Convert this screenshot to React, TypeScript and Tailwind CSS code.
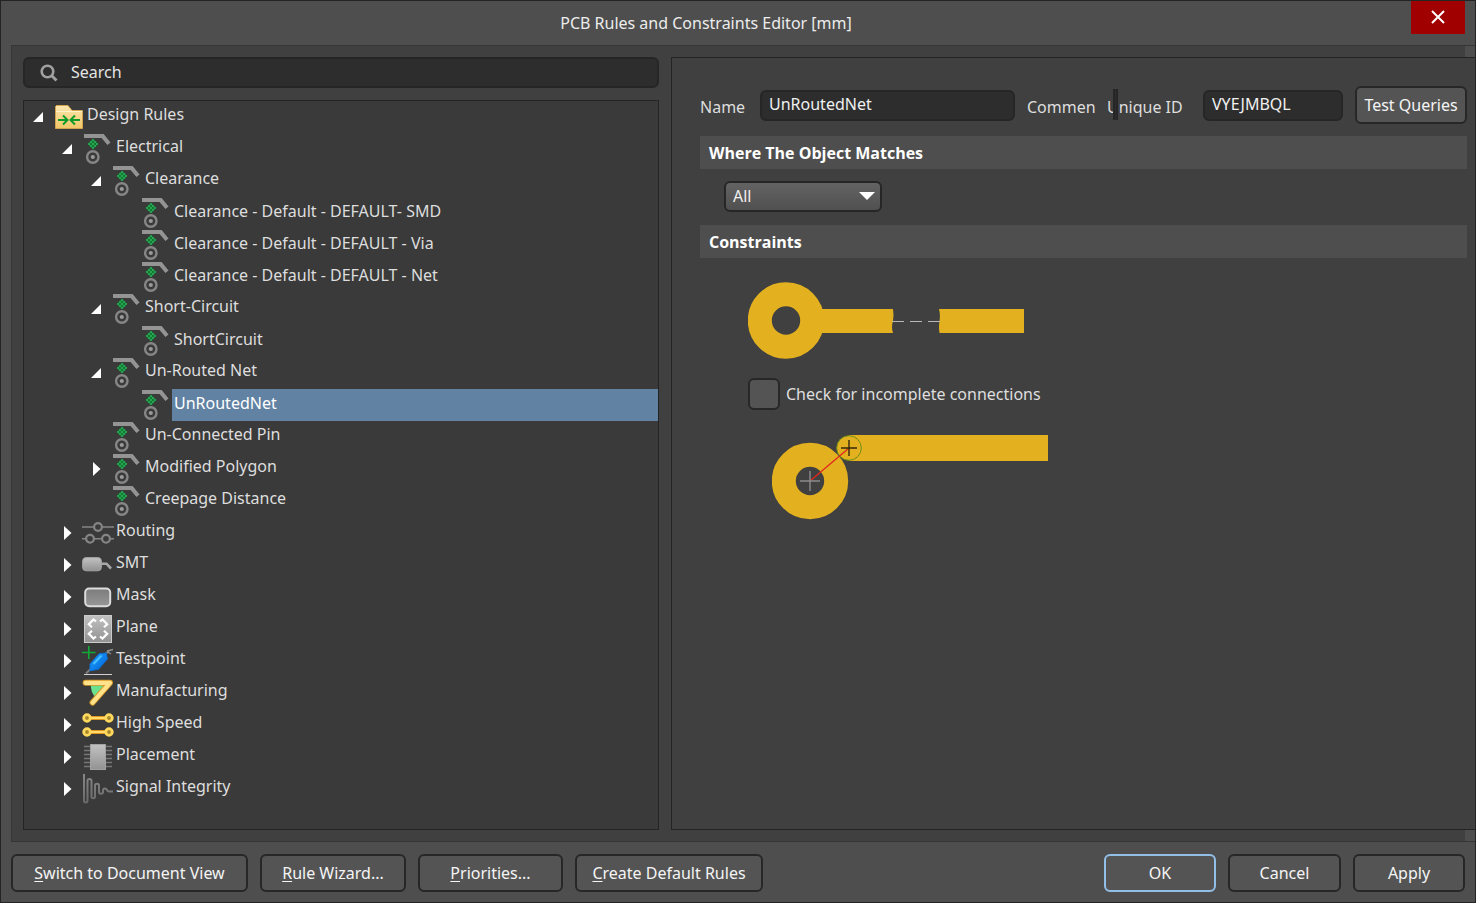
import React, { useState } from 'react';

type IconName =
  | 'folder'
  | 'electrical'
  | 'routing'
  | 'smt'
  | 'mask'
  | 'plane'
  | 'testpoint'
  | 'manufacturing'
  | 'highSpeed'
  | 'placement'
  | 'signal';

interface RuleNode {
  id: string;
  label: string;
  level: number;
  icon: IconName;
  state?: 'open' | 'closed';
}

const nodes: RuleNode[] = [
  { id: 'root', label: 'Design Rules', level: 0, icon: 'folder', state: 'open' },
  { id: 'electrical', label: 'Electrical', level: 1, icon: 'electrical', state: 'open' },
  { id: 'clearance', label: 'Clearance', level: 2, icon: 'electrical', state: 'open' },
  { id: 'clearance-smd', label: 'Clearance - Default - DEFAULT- SMD', level: 3, icon: 'electrical' },
  { id: 'clearance-via', label: 'Clearance - Default - DEFAULT - Via', level: 3, icon: 'electrical' },
  { id: 'clearance-net', label: 'Clearance - Default - DEFAULT - Net', level: 3, icon: 'electrical' },
  { id: 'short', label: 'Short-Circuit', level: 2, icon: 'electrical', state: 'open' },
  { id: 'short-rule', label: 'ShortCircuit', level: 3, icon: 'electrical' },
  { id: 'unrouted', label: 'Un-Routed Net', level: 2, icon: 'electrical', state: 'open' },
  { id: 'unrouted-rule', label: 'UnRoutedNet', level: 3, icon: 'electrical' },
  { id: 'pin', label: 'Un-Connected Pin', level: 2, icon: 'electrical' },
  { id: 'polygon', label: 'Modified Polygon', level: 2, icon: 'electrical', state: 'closed' },
  { id: 'creepage', label: 'Creepage Distance', level: 2, icon: 'electrical' },
  { id: 'routing', label: 'Routing', level: 1, icon: 'routing', state: 'closed' },
  { id: 'smt', label: 'SMT', level: 1, icon: 'smt', state: 'closed' },
  { id: 'mask', label: 'Mask', level: 1, icon: 'mask', state: 'closed' },
  { id: 'plane', label: 'Plane', level: 1, icon: 'plane', state: 'closed' },
  { id: 'testpoint', label: 'Testpoint', level: 1, icon: 'testpoint', state: 'closed' },
  { id: 'manufacturing', label: 'Manufacturing', level: 1, icon: 'manufacturing', state: 'closed' },
  { id: 'high-speed', label: 'High Speed', level: 1, icon: 'highSpeed', state: 'closed' },
  { id: 'placement', label: 'Placement', level: 1, icon: 'placement', state: 'closed' },
  { id: 'signal', label: 'Signal Integrity', level: 1, icon: 'signal', state: 'closed' },
];

const indent = ['pl-[9px]', 'pl-[38px]', 'pl-[67px]', 'pl-[96px]'];

// Shared gradients, drawn once and referenced by every tree icon
const IconDefs = () => (
  <svg className="absolute h-0 w-0" aria-hidden="true">
    <defs>
      <linearGradient id="folderFill" x1="0" y1="0" x2="0" y2="1">
        <stop offset="0" stopColor="#fbe7b0" />
        <stop offset="1" stopColor="#f2c766" />
      </linearGradient>
      <linearGradient id="greyFill" x1="0" y1="0" x2="0" y2="1">
        <stop offset="0" stopColor="#c2c2c2" />
        <stop offset="1" stopColor="#929292" />
      </linearGradient>
      <linearGradient id="maskFill" x1="0" y1="0" x2="0" y2="1">
        <stop offset="0" stopColor="#7c7c7c" />
        <stop offset="1" stopColor="#979797" />
      </linearGradient>
      <linearGradient id="probeFill" x1="0" y1="0" x2="1" y2="1">
        <stop offset="0" stopColor="#1fa4ff" />
        <stop offset="1" stopColor="#0060d8" />
      </linearGradient>
      <linearGradient id="waveStroke" gradientUnits="userSpaceOnUse" x1="0" y1="0" x2="0" y2="32">
        <stop offset="0" stopColor="#888888" />
        <stop offset="1" stopColor="#686868" />
      </linearGradient>
      <pattern id="greenCheck" width="4" height="4" patternUnits="userSpaceOnUse">
        <rect width="4" height="4" fill="#0e7a33" />
        <rect width="2" height="2" fill="#2aa552" />
        <rect x="2" y="2" width="2" height="2" fill="#2aa552" />
      </pattern>
    </defs>
  </svg>
);

const drawIcon = (name: IconName) => {
  switch (name) {
    case 'folder':
      return (
        <>
          <path d="M2.5 27.5V5.5L3.5 4.5H15L19 9.5H29.5V27.5Z" fill="url(#folderFill)" stroke="#d3a44d" />
          <path d="M3 10.5H29" stroke="#fff2c8" />
          <path d="M5 19H14.5M10 14.5L14.5 19L10 23.5M27 19H17.5M22 14.5L17.5 19L22 23.5" fill="none" stroke="#109a2c" strokeWidth="2" />
        </>
      );
    case 'electrical':
      return (
        <>
          <path d="M2 3.1H20.7L27 10.7" fill="none" stroke="#949494" strokeWidth="4" />
          <path d="M11 5.5L16.5 11L11 16.5L5.5 11Z" fill="url(#greenCheck)" />
          <circle cx="10.8" cy="24" r="5.7" fill="none" stroke="#868686" strokeWidth="2.4" />
          <circle cx="10.8" cy="24" r="2.1" fill="#9a9a9a" />
        </>
      );
    case 'routing':
      return (
        <g fill="none" stroke="#858585" strokeWidth="2.2">
          <path d="M0 10H12M20 10H32M0 21.7H4M12 21.7H20M28 21.7H32" strokeWidth="1.6" />
          <circle cx="16" cy="10" r="3.9" />
          <circle cx="8" cy="21.7" r="3.9" />
          <circle cx="24" cy="21.7" r="3.9" />
        </g>
      );
    case 'smt':
      return (
        <>
          <path d="M19 14.7H24.5L29 19.5" fill="none" stroke="#a8a8a8" strokeWidth="2.6" />
          <rect x="0.6" y="8.6" width="18.8" height="13.2" rx="3.5" fill="url(#greyFill)" stroke="#a4a4a4" />
        </>
      );
    case 'mask':
      return <rect x="3.2" y="7.6" width="25" height="17.6" rx="4" fill="url(#maskFill)" stroke="#dcdcdc" strokeWidth="2" />;
    case 'plane':
      return (
        <>
          <rect x="2.5" y="2.5" width="27" height="27" fill="url(#greyFill)" stroke="#cbcbcb" />
          <path
            d="M14 8.5L11.5 6.5L6.8 11.2L10 14.2M18 8.5L20.5 6.5L25.2 11.2L22 14.2M14 23.5L11.5 25.5L6.8 20.8L10 17.8M18 23.5L20.5 25.5L25.2 20.8L22 17.8"
            fill="none"
            stroke="#ffffff"
            strokeWidth="2.2"
          />
        </>
      );
    case 'testpoint':
      return (
        <>
          <path d="M4 28.5L10 22.5M23 9.5L27 6" stroke="#7b7b7b" strokeWidth="2" />
          <path d="M25 6L31 4.5M25 6.5L29 9" stroke="#8e8e8e" strokeWidth="1.4" />
          <path d="M8 25.8L8 19L17 8.8L24.2 8L25.4 14L16.5 24.2Z" fill="url(#probeFill)" stroke="#0b6fd6" strokeLinejoin="round" />
          <path d="M11.5 19L19.5 10.5" stroke="#45c1ff" strokeWidth="2" />
          <path d="M0 7.5H13.5M6.8 1V14" stroke="#10a836" strokeWidth="1.6" />
          <path d="M2 29.5H30" stroke="#d0d0d0" strokeWidth="1" />
        </>
      );
    case 'manufacturing':
      return (
        <>
          <path d="M8.8 8H24L13.5 20.5Q8.6 15 8.8 8Z" fill="#6be08e" />
          <path d="M3.6 5.8H28L10.6 25.6" fill="none" stroke="#d99a28" strokeWidth="6" strokeLinecap="round" strokeLinejoin="round" />
          <path d="M3.6 5.8H28L10.6 25.6" fill="none" stroke="#ffe28a" strokeWidth="4.2" strokeLinecap="round" strokeLinejoin="round" />
        </>
      );
    case 'highSpeed':
      return (
        <>
          <path d="M6 9H26M6 23H26" stroke="#e0961f" strokeWidth="4" />
          <path d="M6 9H26M6 23H26" stroke="#ffdc6c" strokeWidth="2" />
          {[[5, 9], [27, 9], [5, 23], [27, 23]].map(([x, y]) => (
            <circle key={`${x}-${y}`} cx={x} cy={y} r="3.3" fill="#a8872c" stroke="#ffd95e" strokeWidth="2.8" />
          ))}
        </>
      );
    case 'placement':
      return (
        <>
          <path d="M2 5.5H30M2 9.5H30M2 13.5H30M2 17.5H30M2 21.5H30M2 25.5H30" stroke="#777777" strokeWidth="1.4" />
          <rect x="8.5" y="3.5" width="15" height="25" fill="url(#greyFill)" stroke="#a2a2a2" />
        </>
      );
    case 'signal':
      return (
        <path
          d="M2 1V27.5Q2 29.5 3.8 29.5Q5.5 29.5 5.5 27.5V8Q5.5 6 7.5 6Q9.5 6 9.5 8V23.5Q9.5 25.3 11.3 25.3Q13 25.3 13 23.5V12.5Q13 10.8 15 10.8Q17 10.8 17 12.5V18.5Q17 20.8 19 20.8Q21 20.8 21 19V17.5Q21 15.6 23 15.6Q24.5 15.6 25 17.2Q25.5 18.6 27 18.6H31"
          fill="none"
          stroke="url(#waveStroke)"
          strokeWidth="2"
        />
      );
  }
};

const TreeRow: React.FC<{ node: RuleNode; selected: boolean; onSelect: () => void }> = ({ node, selected, onSelect }) => (
  <li className={`flex h-8 items-center ${indent[node.level]}`}>
    {node.state ? (
      <button aria-label={`Toggle ${node.label}`} className="mr-[10px] flex h-4 w-[10px] shrink-0 items-center justify-end">
        {node.state === 'open' ? (
          <svg width="10" height="10" fill="#ffffff"><path d="M10 0V10H0Z" /></svg>
        ) : (
          <svg width="8" height="14" fill="#ffffff"><path d="M0 0L7.5 7L0 14Z" /></svg>
        )}
      </button>
    ) : (
      <span className="mr-[10px] w-[10px] shrink-0" />
    )}
    <svg width="32" height="32" className="shrink-0">{drawIcon(node.icon)}</svg>
    <button
      onClick={onSelect}
      className={`flex h-8 flex-1 items-center whitespace-nowrap px-[2px] text-left ${node.level === 3 ? 'pb-1' : 'pb-[6px]'} ${
        selected ? 'bg-[#6182a2] text-white' : ''
      }`}
    >
      {node.label}
    </button>
  </li>
);

const SectionTitle: React.FC<{ children: React.ReactNode }> = ({ children }) => (
  <h2 className="flex h-[33px] items-center bg-[#4e4e4e] px-[9px] font-['Open_Sans',sans-serif] font-bold text-white">{children}</h2>
);

const fieldClass = 'h-[31px] rounded-md border-2 border-[#262626] bg-[#2d2d2d] px-[7px] pb-[2px] text-[#f0f0f0] outline-none';

const BottomButton: React.FC<{ label: string; width: string; hotkey?: boolean; primary?: boolean }> = ({
  label,
  width,
  hotkey,
  primary,
}) => (
  <button
    className={`h-[38px] shrink-0 whitespace-nowrap rounded-md border-2 bg-[#545454] text-[#f4f4f4] ${width} ${
      primary ? 'border-[#92bfe8]' : 'border-[#272727]'
    }`}
  >
    {hotkey ? (
      <>
        <span className="underline underline-offset-2">{label[0]}</span>
        {label.slice(1)}
      </>
    ) : (
      label
    )}
  </button>
);

// Pad with a broken track
const UnroutedDrawing = () => (
  <svg width="276" height="78" role="img" aria-label="Unrouted net">
    <path d="M70 27H145Q146 33 145 39Q143 45 145 51H70Z" fill="#e3b11f" />
    <path d="M276 27H191Q192.500 33 191.500 39Q190.500 45 191.500 51H276Z" fill="#e3b11f" />
    <circle cx="38" cy="38.500" r="26.200" fill="none" stroke="#e3b11f" strokeWidth="24" />
    <path d="M144 39.500H156M162 39.500H174M180 39.500H192" stroke="#b9b9b9" />
  </svg>
);

// Track end that misses the pad centre
const IncompleteDrawing = () => (
  <svg width="276" height="86" role="img" aria-label="Incomplete connection">
    <path d="M77 0H276V26H77Z" fill="#e3b11f" />
    <circle cx="38" cy="46" r="26.200" fill="none" stroke="#e3b11f" strokeWidth="24" />
    <circle cx="77" cy="13" r="12.300" fill="#e3b11f" stroke="#6f8f16" />
    <path d="M38 46L77 13" stroke="#e0281c" strokeWidth="1.300" />
    <path d="M69 13H85M77 5V21" stroke="#33290d" strokeWidth="1.400" />
    <path d="M28 46H48M38 36V56" stroke="#8b8b8b" strokeWidth="1.400" />
  </svg>
);

export default function App() {
  const [selected, setSelected] = useState('unrouted-rule');
  const [name, setName] = useState('UnRoutedNet');
  const [uniqueId, setUniqueId] = useState('VYEJMBQL');
  const [comment, setComment] = useState('');
  const [checked, setChecked] = useState(false);

  return (
    <div className="flex min-h-screen w-full flex-col overflow-hidden border border-[#242424] bg-[#4e4e4e] font-['Noto_Sans','Open_Sans',sans-serif] text-base leading-6 text-[#dedede]">
      <IconDefs />
      <header className="flex h-11 shrink-0 items-start pr-[10px]">
        <h1 className="flex-1 pt-[10px] text-center text-[#ececec]">PCB Rules and Constraints Editor [mm]</h1>
        <button aria-label="Close" className="flex h-[33px] w-[54px] items-center justify-center bg-[#a00000] pb-[2px]">
          <svg width="14" height="14" stroke="#ffffff" strokeWidth="2"><path d="M1 1L13 13M13 1L1 13" /></svg>
        </button>
      </header>

      <main className="ml-[10px] flex flex-1 flex-col border-y border-l border-[#363636]">
        <div className="mr-[10px] h-[11px] shrink-0 bg-[#404040]" />
        <div className="-mr-px flex flex-1 bg-[#404040] pl-[11px]">
          <section className="mr-3 flex w-[636px] shrink-0 flex-col">
            <label className="flex h-[31px] items-center rounded-md border-2 border-[#262626] bg-[#2d2d2d] pl-[15px]">
              <svg width="18" height="18" fill="none" stroke="#a0a0a0" className="shrink-0">
                <circle cx="7.500" cy="7.500" r="5.800" strokeWidth="2.600" />
                <path d="M11.500 11.500L16.500 16.500" strokeWidth="3" />
              </svg>
              <input
                type="text"
                aria-label="Search"
                placeholder="Search"
                className="ml-[13px] flex-1 bg-transparent pb-[2px] outline-none placeholder:text-[#e4e4e4]"
              />
            </label>
            <ul className="mt-3 flex-1 border border-[#242424] bg-[#3a3a3a]">
              {nodes.map(node => (
                <TreeRow key={node.id} node={node} selected={selected === node.id} onSelect={() => setSelected(node.id)} />
              ))}
            </ul>
          </section>

          <section className="min-w-0 flex-1 border-y border-l border-[#242424] pb-8 pl-7 pr-[9px]">
            <div className="flex h-[78px] items-center pt-4">
              <label htmlFor="name" className="w-[60px] shrink-0 pt-1">Name</label>
              <input id="name" value={name} onChange={e => setName(e.target.value)} className={`${fieldClass} min-w-0 flex-1`} />
              <label htmlFor="comment" className="ml-3 w-[69px] shrink-0 whitespace-nowrap pt-1">Commen</label>
              <div className="relative ml-[11px] w-24 shrink-0">
                <label htmlFor="uid" className="block whitespace-nowrap pt-1">Unique ID</label>
                {/* the comment field is squeezed to almost nothing and sits over the next label */}
                <input
                  id="comment"
                  value={comment}
                  onChange={e => setComment(e.target.value)}
                  className="absolute left-[6px] top-[-2px] h-[31px] w-[5px] border-x-2 border-[#262626] bg-[#2d2d2d] outline-none"
                />
              </div>
              <input id="uid" value={uniqueId} onChange={e => setUniqueId(e.target.value)} className={`${fieldClass} w-[140px] shrink-0`} />
              <button className="ml-3 h-[38px] w-28 shrink-0 whitespace-nowrap rounded-md border-2 border-[#272727] bg-[#545454] text-[#f4f4f4]">
                Test Queries
              </button>
            </div>

            <SectionTitle>Where The Object Matches</SectionTitle>
            <div className="relative ml-6 mt-3 w-[158px]">
              <select
                aria-label="Where the object matches"
                className="block h-[31px] w-full appearance-none rounded-md border-2 border-[#262626] bg-linear-to-b from-[#636363] to-[#505050] px-[7px] pb-[2px] text-[#f0f0f0] outline-none"
              >
                <option>All</option>
              </select>
              <svg width="16" height="8" fill="#ffffff" className="pointer-events-none absolute right-[7px] top-[11px]">
                <path d="M0 0H16L8 8Z" />
              </svg>
            </div>

            <div className="mt-[13px]">
              <SectionTitle>Constraints</SectionTitle>
            </div>
            <div className="flex flex-col items-start pl-12 pt-6">
              <UnroutedDrawing />
              <label className="mt-[18px] flex items-center gap-[6px]">
                <input
                  type="checkbox"
                  checked={checked}
                  onChange={e => setChecked(e.target.checked)}
                  className="h-8 w-8 appearance-none rounded-md border-2 border-[#272727] bg-[#545454] checked:bg-[#6182a2]"
                />
                Check for incomplete connections
              </label>
              <div className="ml-6 mt-[25px]">
                <IncompleteDrawing />
              </div>
            </div>
          </section>
        </div>
        <div className="mr-[10px] h-[11px] shrink-0 bg-[#404040]" />
      </main>

      <footer className="flex h-[60px] shrink-0 items-center gap-3 px-[10px] pb-px pt-[2px]">
        <BottomButton label="Switch to Document View" width="w-[237px]" hotkey />
        <BottomButton label="Rule Wizard..." width="w-[146px]" hotkey />
        <BottomButton label="Priorities..." width="w-[145px]" hotkey />
        <BottomButton label="Create Default Rules" width="w-[188px]" hotkey />
        <div className="ml-auto flex gap-3">
          <BottomButton label="OK" width="w-28" primary />
          <BottomButton label="Cancel" width="w-[113px]" />
          <BottomButton label="Apply" width="w-28" />
        </div>
      </footer>
    </div>
  );
}
